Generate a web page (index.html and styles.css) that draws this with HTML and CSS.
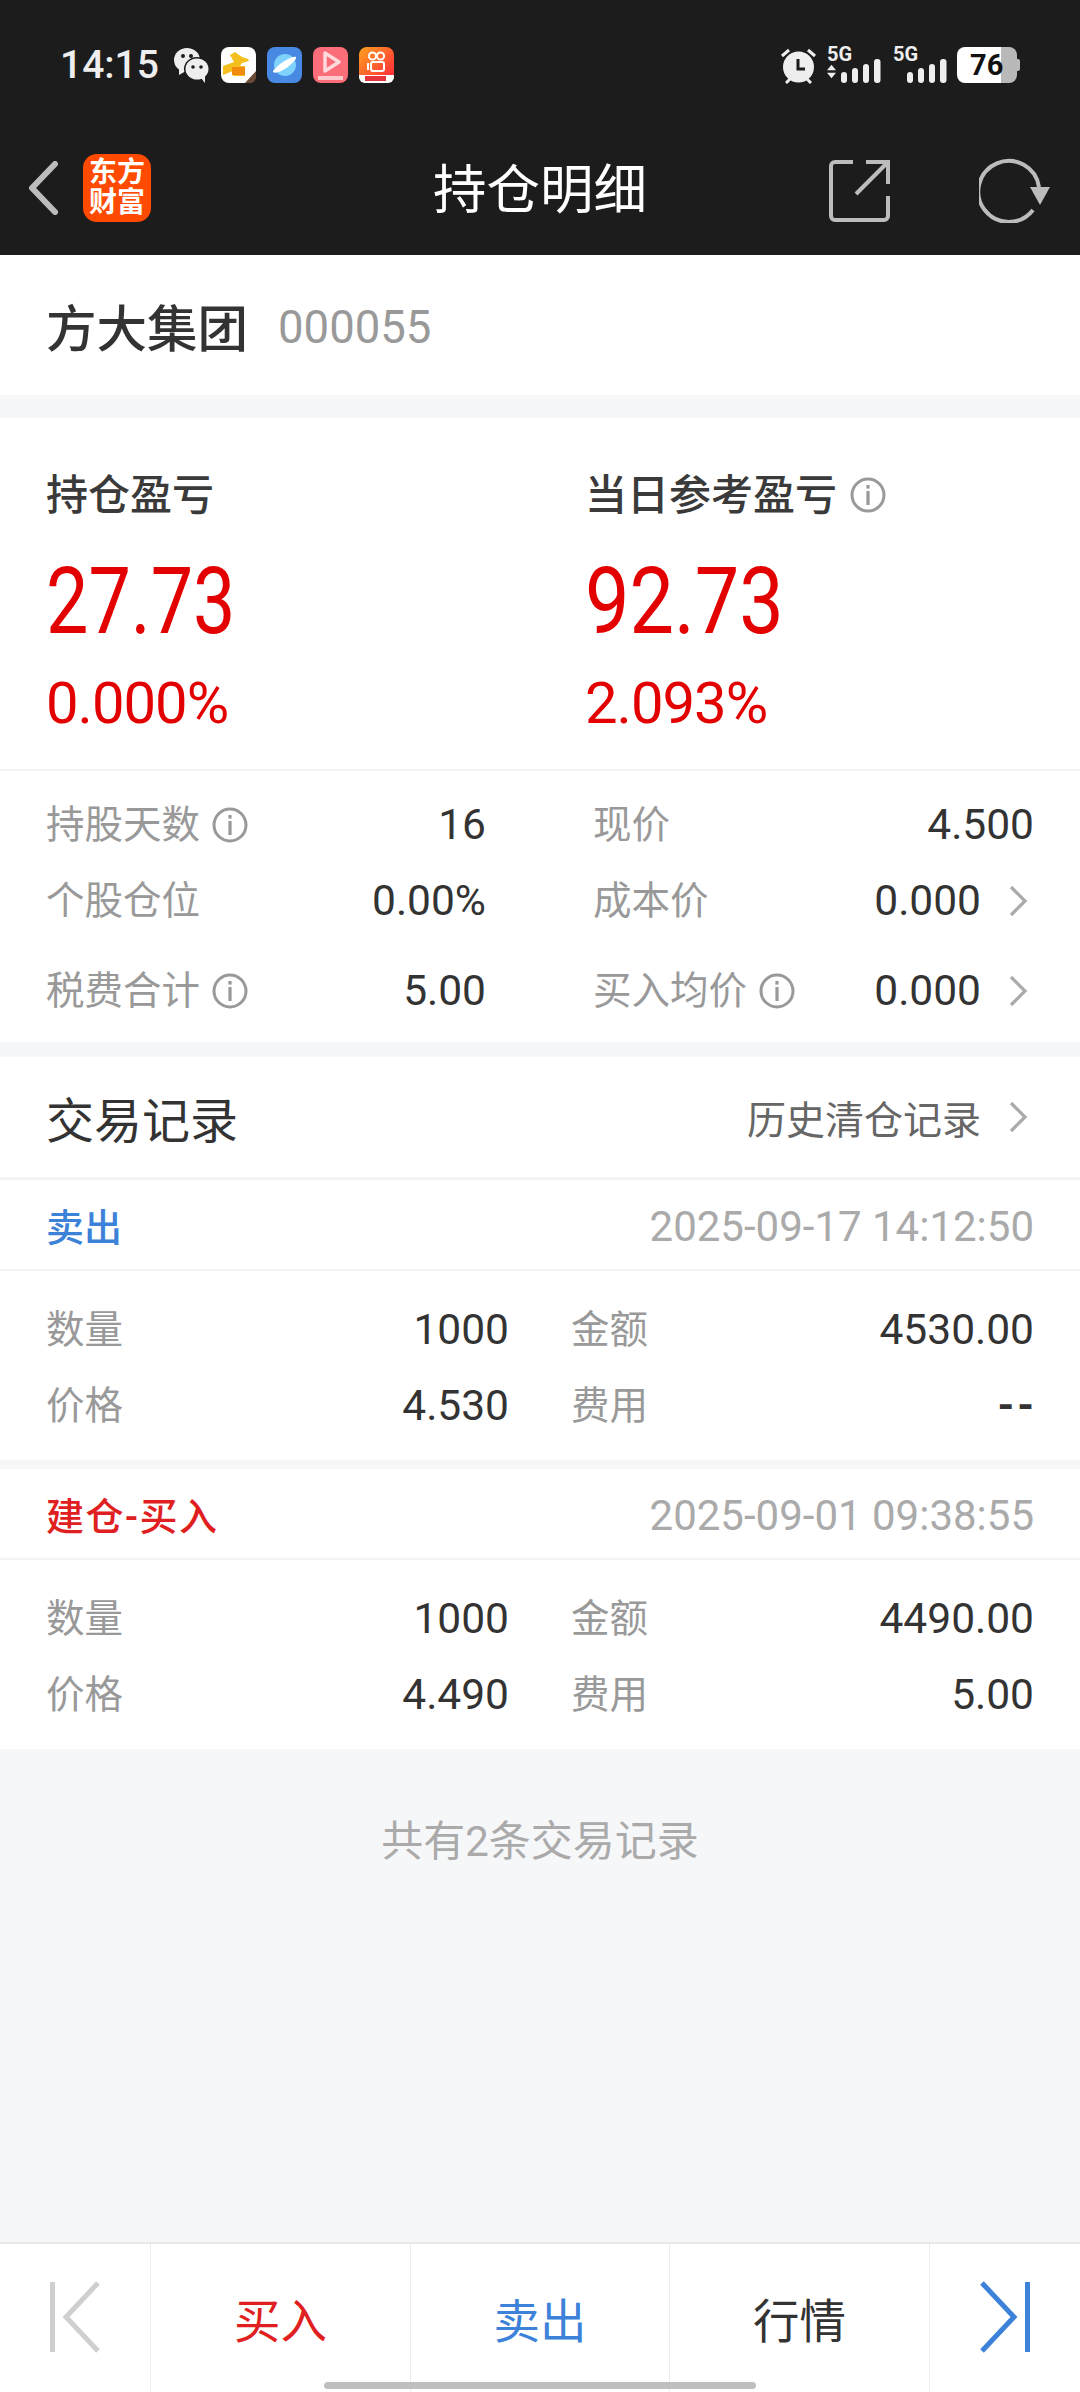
FILE: index.html
```html
<!DOCTYPE html>
<html lang="zh-CN">
<head>
<meta charset="utf-8">
<title>持仓明细</title>
<link rel="stylesheet" href="styles.css">
</head>
<body>
<svg class="defs" width="0" height="0" aria-hidden="true">
  <symbol id="info" viewBox="0 0 36 36">
    <circle cx="18" cy="18" r="16" fill="none" stroke="currentColor" stroke-width="3"/>
    <rect x="16.4" y="14" width="3.2" height="14" fill="currentColor"/>
    <rect x="16.4" y="8" width="3.2" height="3.6" fill="currentColor"/>
  </symbol>
  <symbol id="chev" viewBox="0 0 20 32">
    <path d="M3 2 L17 16 L3 30" fill="none" stroke="currentColor" stroke-width="3.2"/>
  </symbol>
  <symbol id="bars" viewBox="0 0 40 24">
    <rect x="0" y="13" width="6" height="11" rx="3" fill="#eee"/>
    <rect x="11" y="9" width="6" height="15" rx="3" fill="#eee"/>
    <rect x="22" y="5" width="6" height="19" rx="3" fill="#eee"/>
    <rect x="33" y="0" width="6.5" height="24" rx="3" fill="#eee"/>
  </symbol>
</svg>
<div class="page">
  <header class="head">
    <div class="status">
      <span class="time">14:15</span>
      <svg class="wechat" viewBox="0 0 35 36"><ellipse cx="13" cy="13" rx="13" ry="12" fill="#eee"/><path d="M5 21 L5 28 L12 24Z" fill="#eee"/><ellipse cx="23" cy="22" rx="11.8" ry="10.8" fill="#1c1c1c" stroke="#1c1c1c" stroke-width="2.5"/><ellipse cx="23" cy="22" rx="11.5" ry="10.5" fill="#eee"/><path d="M27 31 L31 36 L31 29Z" fill="#eee"/><circle cx="9" cy="9" r="2" fill="#1c1c1c"/><circle cx="17" cy="9" r="2" fill="#1c1c1c"/><circle cx="19" cy="20" r="1.8" fill="#1c1c1c"/><circle cx="27" cy="20" r="1.8" fill="#1c1c1c"/></svg>
      <svg class="app" viewBox="0 0 35 36"><rect width="35" height="36" rx="8" fill="#fff"/><path d="M2 19 L13 15 L9 8 L14 5 L21 10 L27 12 L28 14 L21 16 L19 19 L24 19 L24 29 L12 29 L12 24 L2 28Z" fill="#f5bf1d"/><rect x="11" y="20" width="13" height="8" fill="#f28a0c"/><path d="M24 36 L35 24 L35 30 A6 6 0 0 1 29 36Z" fill="#6b4a35"/></svg>
      <svg class="app" viewBox="0 0 35 36"><rect width="35" height="36" rx="8" fill="#4889e4"/><circle cx="18" cy="18" r="11" fill="#7fd2fb"/><path d="M6 25 C5 22 24 8 29 10 C31 13 12 29 6 25Z" fill="#fff"/></svg>
      <svg class="app" viewBox="0 0 35 36"><rect width="35" height="36" rx="8" fill="#fb6d78"/><path d="M12 6 L26 15 L12 24Z" fill="none" stroke="#ffd9dc" stroke-width="3.5" stroke-linejoin="round"/><rect x="5" y="29" width="25" height="4" fill="#ffc9cd"/></svg>
      <svg class="app" viewBox="0 0 35 36"><defs><linearGradient id="ks" x1="0" y1="0" x2="1" y2="1"><stop offset="0" stop-color="#ffa21f"/><stop offset="1" stop-color="#ff1f3d"/></linearGradient></defs><rect width="35" height="36" rx="8" fill="url(#ks)"/><circle cx="13.5" cy="9" r="3.6" fill="none" stroke="#fff" stroke-width="2"/><circle cx="21.5" cy="9" r="3.6" fill="none" stroke="#fff" stroke-width="2"/><rect x="12" y="15" width="13" height="9" rx="2" fill="none" stroke="#fff" stroke-width="2"/><path d="M9 16 L9 23" stroke="#fff" stroke-width="2"/><path d="M0 28 H35 V30 A6 6 0 0 1 29 36 H6 A6 6 0 0 1 0 30Z" fill="#fff"/><rect x="6" y="29" width="21" height="5" fill="#e8333a"/></svg>
      <span class="spacer"></span>
      <svg class="alarm" viewBox="0 0 37 37"><circle cx="18.5" cy="20" r="15.5" fill="#eee"/><path d="M2 9 L9 3" stroke="#eee" stroke-width="3"/><path d="M35 9 L28 3" stroke="#eee" stroke-width="3"/><path d="M6 36 L10 32" stroke="#eee" stroke-width="3"/><path d="M31 36 L27 32" stroke="#eee" stroke-width="3"/><path d="M18 12 V22 H25" fill="none" stroke="#1c1c1c" stroke-width="3"/></svg>
      <div class="sig sig-a">
        <span class="net">5G</span>
        <div class="sig-low">
          <svg class="updown" viewBox="0 0 10 15"><path d="M5 0 L10 6 H0Z M5 15 L0 9 H10Z" fill="#eee"/></svg>
          <svg class="bars" viewBox="0 0 40 24"><use href="#bars"/></svg>
        </div>
      </div>
      <div class="sig sig-b">
        <span class="net">5G</span>
        <div class="sig-low">
          <svg class="bars" viewBox="0 0 40 24"><use href="#bars"/></svg>
        </div>
      </div>
      <div class="battery"><div class="bat-body"><span class="bat-num">76</span></div><div class="bat-nub"></div></div>
    </div>
    <div class="titlebar">
      <div class="title-left">
        <svg class="back" viewBox="0 0 31 54"><path d="M28 3 L5 27 L28 51" fill="none" stroke="#bcbcbc" stroke-width="6" stroke-linecap="round" stroke-linejoin="round"/></svg>
        <div class="logo"><span>东方</span><span>财富</span></div>
      </div>
      <h1 class="title">持仓明细</h1>
      <div class="title-right">
        <svg class="share" viewBox="0 0 61 62"><path d="M24 2 H6 A4 4 0 0 0 2 6 V56 A4 4 0 0 0 6 60 H55 A4 4 0 0 0 59 56 V36" fill="none" stroke="#bcbcbc" stroke-width="4"/><path d="M37 2 H59 V24" fill="none" stroke="#bcbcbc" stroke-width="4"/><path d="M27 34 L58 3" fill="none" stroke="#bcbcbc" stroke-width="4"/></svg>
        <svg class="refresh" viewBox="0 0 71 65"><path d="M54 52 A30.5 30.5 0 1 1 60 29" fill="none" stroke="#bcbcbc" stroke-width="4"/><path d="M51 29 H71 L61 47Z" fill="#bcbcbc"/></svg>
      </div>
    </div>
  </header>

  <section class="stock">
    <span class="stock-name">方大集团</span>
    <span class="stock-code">000055</span>
  </section>

  <section class="pnl">
    <div class="pnl-top">
      <div class="pnl-col">
        <div class="pnl-label">持仓盈亏</div>
        <div class="pnl-big narrow-a">27.73</div>
        <div class="pnl-pct">0.000%</div>
      </div>
      <div class="pnl-col">
        <div class="pnl-label">当日参考盈亏<svg class="info info-big"><use href="#info"/></svg></div>
        <div class="pnl-big narrow-b">92.73</div>
        <div class="pnl-pct">2.093%</div>
      </div>
    </div>
    <div class="stats">
      <div class="stat-row">
        <div class="stat"><span class="lab">持股天数<svg class="info"><use href="#info"/></svg></span><span class="val">16</span></div>
        <div class="stat"><span class="lab">现价</span><span class="val">4.500</span></div>
      </div>
      <div class="stat-row r2">
        <div class="stat"><span class="lab">个股仓位</span><span class="val">0.00%</span></div>
        <div class="stat"><span class="lab">成本价</span><span class="val">0.000<svg class="chev"><use href="#chev"/></svg></span></div>
      </div>
      <div class="stat-row r3">
        <div class="stat"><span class="lab">税费合计<svg class="info"><use href="#info"/></svg></span><span class="val">5.00</span></div>
        <div class="stat"><span class="lab">买入均价<svg class="info"><use href="#info"/></svg></span><span class="val">0.000<svg class="chev"><use href="#chev"/></svg></span></div>
      </div>
    </div>
  </section>

  <section class="trades-head">
    <span class="th-title">交易记录</span>
    <span class="th-link">历史清仓记录<svg class="chev"><use href="#chev"/></svg></span>
  </section>

  <section class="trade">
    <div class="trade-top">
      <span class="side sell">卖出</span>
      <span class="when">2025-09-17 14:12:50</span>
    </div>
    <div class="trade-body">
      <div class="cell"><span class="lab">数量</span><span class="val">1000</span></div>
      <div class="cell"><span class="lab">金额</span><span class="val">4530.00</span></div>
      <div class="cell"><span class="lab">价格</span><span class="val">4.530</span></div>
      <div class="cell"><span class="lab">费用</span><span class="val dash">--</span></div>
    </div>
  </section>

  <section class="trade second">
    <div class="trade-top">
      <span class="side buy">建仓-买入</span>
      <span class="when">2025-09-01 09:38:55</span>
    </div>
    <div class="trade-body">
      <div class="cell"><span class="lab">数量</span><span class="val">1000</span></div>
      <div class="cell"><span class="lab">金额</span><span class="val">4490.00</span></div>
      <div class="cell"><span class="lab">价格</span><span class="val">4.490</span></div>
      <div class="cell"><span class="lab">费用</span><span class="val">5.00</span></div>
    </div>
  </section>

  <div class="summary">共有2条交易记录</div>

  <nav class="tabbar">
    <div class="tab tab-edge">
      <svg class="step" viewBox="0 0 50 72"><path d="M2.5 1 V71" stroke="#cfcfcf" stroke-width="5"/><path d="M48 2 L16 36 L48 70" fill="none" stroke="#cfcfcf" stroke-width="5"/></svg>
    </div>
    <div class="tab t-buy">买入</div>
    <div class="tab t-sell">卖出</div>
    <div class="tab t-quote">行情</div>
    <div class="tab tab-edge">
      <svg class="step" viewBox="0 0 50 72"><path d="M47.5 1 V71" stroke="#3b82d8" stroke-width="5"/><path d="M2 2 L34 36 L2 70" fill="none" stroke="#3b82d8" stroke-width="5"/></svg>
    </div>
  </nav>
  <div class="homebar"></div>
</div>
</body>
</html>
```
FILE: styles.css
```css
* { box-sizing: border-box; }
html, body { margin: 0; padding: 0; }
body {
  width: 1080px;
  height: 2392px;
  overflow: hidden;
  font-family: Roboto, "Noto Sans CJK SC", sans-serif;
  background: #f6f7f9;
}
.defs { position: absolute; }
.page { position: relative; width: 1080px; height: 2392px; display: flex; flex-direction: column; }

/* header */
.head { height: 255px; background: #1c1c1c; flex: none; }
.status { height: 130px; padding: 0 60px 0 60px; display: flex; align-items: center; color: #eee; }
.time { font-size: 39px; font-weight: 500; width: 114px; }
.wechat { width: 35px; height: 36px; margin-right: 12px; }
.app { width: 35px; height: 36px; margin-right: 11px; }
.spacer { flex: 1; }
.alarm { width: 37px; height: 37px; margin-right: 10px; }
.sig { position: relative; height: 36px; display: flex; flex-direction: column; justify-content: flex-end; align-items: flex-end; }
.sig-a { width: 54px; margin-right: 12px; }
.sig-b { width: 54px; margin-right: 10px; }
.net { position: absolute; left: 0; top: -3px; font-size: 20px; font-weight: 700; line-height: 20px; }
.sig-low { display: flex; align-items: center; gap: 5px; height: 24px; }
.updown { width: 9px; height: 15px; }
.bars { width: 40px; height: 24px; }
.battery { display: flex; align-items: center; }
.bat-body { width: 60px; height: 36px; border-radius: 8px; background: linear-gradient(90deg, #fff 0 44px, #b9b9b9 44px 100%); display: flex; align-items: center; padding-left: 13px; }
.bat-num { color: #111; font-size: 29px; font-weight: 700; line-height: 36px; }
.bat-nub { width: 3px; height: 12px; background: #b9b9b9; border-radius: 0 2px 2px 0; }

.titlebar { height: 125px; position: relative; display: flex; align-items: center; justify-content: space-between; padding: 0 30px 4px 27px; }
.title-left { display: flex; align-items: center; gap: 25px; margin-top: -5px; }
.back { width: 31px; height: 54px; }
.logo { width: 68px; height: 68px; border-radius: 14px; background: #ff4a00; color: #fff; display: flex; flex-direction: column; align-items: center; justify-content: center; font-size: 28px; font-weight: 700; line-height: 30px; }
.title { margin: 0; font-size: 53.5px; font-weight: 400; color: #fff; position: absolute; left: 0; right: 0; text-align: center; line-height: 70px; }
.title-right { display: flex; align-items: center; gap: 89px; }
.share { width: 61px; height: 62px; }
.refresh { width: 71px; height: 65px; }

/* stock */
.stock { height: 140px; background: #fff; padding: 0 46px; display: flex; align-items: center; gap: 30px; flex: none; }
.stock-name { font-size: 50.5px; font-weight: 500; color: #333; }
.stock-code { font-size: 45.5px; color: #999; margin-top: 4px; }

/* pnl */
.pnl { margin-top: 23px; height: 624px; background: #fff; flex: none; }
.pnl-top { height: 353px; padding: 48px 0 0 46px; display: flex; border-bottom: 2px solid #f3f3f3; }
.pnl-col { width: 539px; flex: none; }
.pnl-label { font-size: 42px; font-weight: 500; line-height: 60px; color: #3a3a3a; display: flex; align-items: center; }
.pnl-big { font-size: 92px; line-height: 110px; margin-top: 21px; color: #e30000; transform-origin: left center; }
.narrow-a { transform: scaleX(.82); }
.narrow-b { transform: scaleX(.86); }
.pnl-pct { font-size: 58px; line-height: 70px; margin-top: 11px; color: #e30000; letter-spacing: -1px; }
.info { width: 36px; height: 36px; color: #999; margin-left: 12px; flex: none; }
.info-big { margin-left: 13px; margin-top: -2px; }

.stats { padding: 24px 46px 0; }
.stat-row { display: grid; grid-template-columns: 440px 441px; column-gap: 107px; height: 60px; }
.stat-row.r2 { margin-top: 16px; }
.stat-row.r3 { margin-top: 30px; }
.stat { display: flex; justify-content: space-between; align-items: center; }
.lab { font-size: 38.5px; color: #999; display: flex; align-items: center; line-height: 60px; }
.val { font-size: 42.5px; color: #333; display: flex; align-items: center; line-height: 60px; }
.val.dash { font-weight: 700; letter-spacing: 3px; margin-right: -3px; }
.chev { width: 20px; height: 32px; color: #aaa; margin-left: 27px; margin-right: 6px; flex: none; }

/* trades */
.trades-head { margin-top: 15px; height: 123px; background: #fff; padding: 0 46px; display: flex; align-items: center; justify-content: space-between; flex: none; border-bottom: 3px solid #f3f3f3; }
.th-title { font-size: 48px; color: #333; }
.th-link { font-size: 39px; color: #666; display: flex; align-items: center; }

.trade { background: #fff; flex: none; height: 280px; }
.trade.second { margin-top: 9px; height: 280px; }
.trade-top { height: 91px; border-bottom: 2px solid #f3f3f3; padding: 0 46px; display: flex; align-items: center; justify-content: space-between; }
.side { font-size: 38px; font-weight: 500; }
.side.sell { color: #3b82d8; }
.side.buy { color: #e02020; letter-spacing: 1.5px; }
.when { font-size: 42px; color: #aaa; margin-top: 3px; }
.trade-body { display: grid; grid-template-columns: 463px 463px; column-gap: 62px; padding: 29px 46px 0; row-gap: 16px; }
.cell { display: flex; justify-content: space-between; align-items: center; height: 60px; }

.summary { flex: none; margin-top: 63px; height: 60px; line-height: 60px; text-align: center; font-size: 42px; color: #aaa; }

/* bottom */
.tabbar { margin-top: auto; height: 150px; flex: none; background: #fff; border-top: 2px solid #e8e8e8; display: grid; grid-template-columns: 150px 260px 259px 260px 151px; }
.tab { display: flex; align-items: center; justify-content: center; font-size: 46.5px; padding-bottom: 2px; border-left: 1px solid #ececec; }
.tab:first-child { border-left: 0; }
.step { width: 50px; height: 72px; }
.t-buy { color: #e02020; }
.t-sell { color: #3b82d8; }
.t-quote { color: #333; }
.homebar { position: absolute; left: 324px; top: 2382px; width: 432px; height: 7px; border-radius: 4px; background: #bfbfbf; }
```
